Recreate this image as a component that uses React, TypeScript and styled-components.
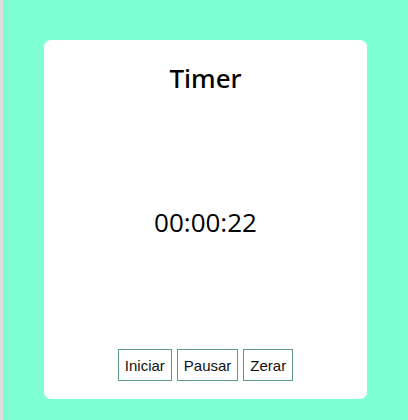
import React, { useState } from 'react';
import styled, { createGlobalStyle } from 'styled-components';

const GlobalStyle = createGlobalStyle`
  html, body {
    margin: 0;
    padding: 0;
  }
  body {
    background: #7fffd4;
  }
`;

const Page = styled.div`
  box-sizing: border-box;
  height: 420px;
  border-left: 3px solid #dedede;
  padding-top: 40px;
  display: flex;
  justify-content: center;
`;

const Card = styled.div`
  box-sizing: border-box;
  width: 323px;
  height: 359px;
  background: #fff;
  border-radius: 7px;
  display: flex;
  flex-direction: column;
  align-items: center;
  justify-content: space-between;
  padding: 22px 0 18px;
  font-family: 'Open Sans', 'Noto Sans', sans-serif;
  color: #000;
`;

const Title = styled.h1`
  margin: 0;
  font-family: 'Noto Sans', 'Open Sans', sans-serif;
  font-size: 26px;
  font-weight: 500;
  line-height: 32px;
`;

const Display = styled.div`
  font-size: 26px;
  line-height: 32px;
`;

const Buttons = styled.div`
  display: flex;
  gap: 5px;
`;

const Button = styled.button`
  box-sizing: border-box;
  height: 32px;
  padding: 0 6px;
  background: #fff;
  border: 1px solid #5f9c88;
  font-family: 'Liberation Sans', Arial, sans-serif;
  font-size: 15px;
  color: #111;
  cursor: pointer;
`;

const pad = (n: number) => String(n).padStart(2, '0');

const format = (total: number) => {
  const h = Math.floor(total / 3600);
  const m = Math.floor((total % 3600) / 60);
  const s = total % 60;
  return `${pad(h)}:${pad(m)}:${pad(s)}`;
};

const App = () => {
  const [seconds, setSeconds] = useState(22);

  return (
    <>
      <GlobalStyle />
      <Page>
        <Card>
          <Title>Timer</Title>
          <Display>{format(seconds)}</Display>
          <Buttons>
            <Button>Iniciar</Button>
            <Button>Pausar</Button>
            <Button onClick={() => setSeconds(0)}>Zerar</Button>
          </Buttons>
        </Card>
      </Page>
    </>
  );
};

export default App;
